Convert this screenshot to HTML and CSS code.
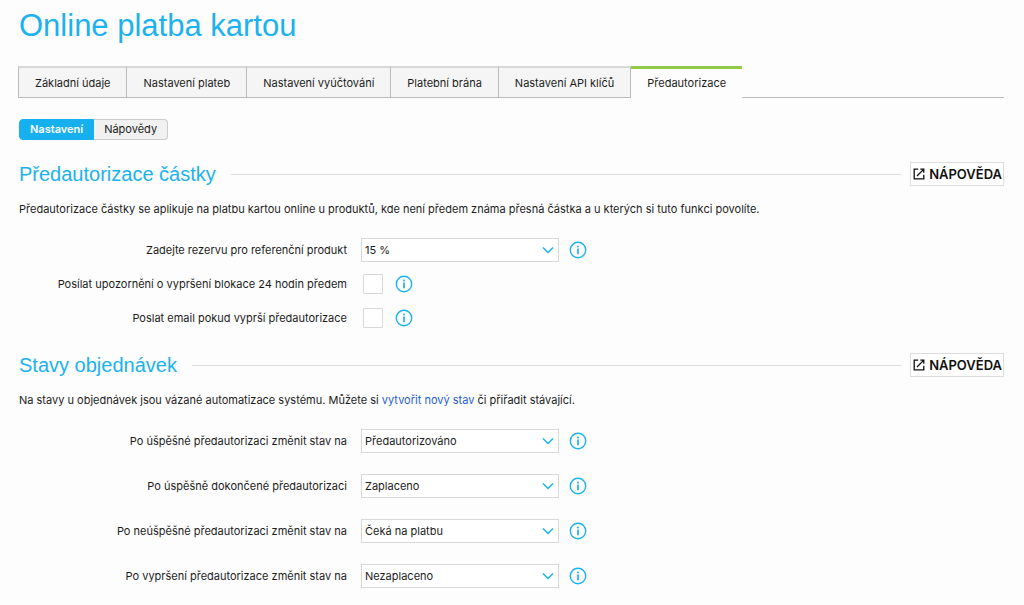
FILE: index.html
```
<!DOCTYPE html>
<html lang="cs">

<head>
  <meta charset="UTF-8" />
  <meta name="viewport" content="width=device-width, initial-scale=1.0" />
  <title>Online platba kartou</title>
  <link rel="stylesheet" href="styles.css">
</head>

<body>
  <!-- shared icons -->
  <svg class="sprite" aria-hidden="true">
    <symbol id="icon-info" viewBox="0 0 18 18">
      <circle cx="9" cy="9" r="7.7" fill="none" stroke="currentColor" stroke-width="1.4" />
      <circle cx="9" cy="5.4" r="1" fill="currentColor" />
      <path d="M9 7.5v5.8" fill="none" stroke="currentColor" stroke-width="1.7" />
    </symbol>
    <symbol id="icon-open" viewBox="0 0 12 12">
      <path d="M5.2 1.2H1.2v9.6h9.6V6.8M7.3 1.2h3.5v3.5M10.6 1.4L4 8" fill="none" stroke="currentColor" stroke-width="1.3" />
    </symbol>
  </svg>

  <main class="page">
    <h1>Online platba kartou</h1>

    <nav class="tabs">
      <a class="tab" href="#">Základní údaje</a>
      <a class="tab" href="#">Nastavení plateb</a>
      <a class="tab" href="#">Nastavení vyúčtování</a>
      <a class="tab" href="#">Platební brána</a>
      <a class="tab" href="#">Nastavení API klíčů</a>
      <a class="tab active" href="#" aria-current="page">Předautorizace</a>
    </nav>

    <div class="switch">
      <button type="button" class="active">Nastavení</button>
      <button type="button">Nápovědy</button>
    </div>

    <section>
      <div class="section-head">
        <h2>Předautorizace částky</h2>
        <button type="button" class="help"><svg><use href="#icon-open" /></svg>NÁPOVĚDA</button>
      </div>
      <p>Předautorizace částky se aplikuje na platbu kartou online u produktů, kde není předem známa přesná částka a u kterých si tuto funkci povolíte.</p>
      <div class="row">
        <label for="reserve">Zadejte rezervu pro referenční produkt</label>
        <div class="field">
          <select id="reserve"><option>15 %</option></select>
          <button type="button" class="info" aria-label="Informace"><svg><use href="#icon-info" /></svg></button>
        </div>
      </div>
      <div class="row row-check">
        <label for="notify">Posílat upozornění o vypršení blokace 24 hodin předem</label>
        <div class="field">
          <input type="checkbox" id="notify">
          <button type="button" class="info" aria-label="Informace"><svg><use href="#icon-info" /></svg></button>
        </div>
      </div>
      <div class="row row-check">
        <label for="email">Poslat email pokud vyprší předautorizace</label>
        <div class="field">
          <input type="checkbox" id="email">
          <button type="button" class="info" aria-label="Informace"><svg><use href="#icon-info" /></svg></button>
        </div>
      </div>
    </section>

    <section>
      <div class="section-head">
        <h2>Stavy objednávek</h2>
        <button type="button" class="help"><svg><use href="#icon-open" /></svg>NÁPOVĚDA</button>
      </div>
      <p>Na stavy u objednávek jsou vázané automatizace systému. Můžete si <a href="#">vytvořit nový stav</a> či přiřadit stávající.</p>
      <div class="row">
        <label for="success">Po úšpěšné předautorizaci změnit stav na</label>
        <div class="field">
          <select id="success"><option>Předautorizováno</option></select>
          <button type="button" class="info" aria-label="Informace"><svg><use href="#icon-info" /></svg></button>
        </div>
      </div>
      <div class="row">
        <label for="done">Po úspěšně dokončené předautorizaci</label>
        <div class="field">
          <select id="done"><option>Zaplaceno</option></select>
          <button type="button" class="info" aria-label="Informace"><svg><use href="#icon-info" /></svg></button>
        </div>
      </div>
      <div class="row">
        <label for="failed">Po neúšpěšné předautorizaci změnit stav na</label>
        <div class="field">
          <select id="failed"><option>Čeká na platbu</option></select>
          <button type="button" class="info" aria-label="Informace"><svg><use href="#icon-info" /></svg></button>
        </div>
      </div>
      <div class="row">
        <label for="expired">Po vypršení předautorizace změnit stav na</label>
        <div class="field">
          <select id="expired"><option>Nezaplaceno</option></select>
          <button type="button" class="info" aria-label="Informace"><svg><use href="#icon-info" /></svg></button>
        </div>
      </div>
    </section>
  </main>
</body>

</html>
```
FILE: styles.css
```
* {
  box-sizing: border-box;
}

body {
  margin: 0;
  background: #fdfdfd;
  color: #1c1c1c;
  font-family: Inter, "Liberation Sans", sans-serif;
  font-size: 11px;
  line-height: 16px;
}

button,
select {
  font: inherit;
  color: inherit;
}

.sprite {
  display: none;
}

.page {
  padding: 8px 20px 0 18px;
}

h1,
h2 {
  margin: 0;
  color: #1bb2ef;
  font-family: "Liberation Sans", Arial, sans-serif;
  font-weight: 400;
}

h1 {
  font-size: 31px;
  line-height: 36px;
}

h2 {
  font-size: 20px;
  line-height: 24px;
}

/* tabs */
.tabs {
  display: flex;
  margin-top: 22px;
}

.tabs::after {
  content: "";
  flex: 1;
  border-bottom: 1px solid #bbb;
}

.tab {
  padding: 7px 16px 6px;
  border-top: 2px solid #d8d8d8;
  border-right: 1px solid #bbb;
  border-bottom: 1px solid #bbb;
  background: #f5f5f5;
  color: inherit;
  text-decoration: none;
}

.tab:first-child {
  border-left: 1px solid #bbb;
}

.tab.active {
  padding-top: 6px;
  border-top: 3px solid #92cb48;
  border-right: 0;
  border-bottom: 0;
  background: none;
}

/* settings / help switch */
.switch {
  display: flex;
  margin-top: 21px;
}

.switch button {
  padding: 1px 10px;
  border: 1px solid #ccc;
  border-left: 0;
  border-radius: 0 4px 4px 0;
  background: #f1f1f1;
  line-height: 17px;
}

.switch .active {
  border: 1px solid #16b0ee;
  border-radius: 4px 0 0 4px;
  background: #16b0ee;
  color: #fff;
  font-weight: 600;
}

/* sections */
section {
  margin-top: 22px;
}

section + section {
  margin-top: 23px;
}

.section-head {
  display: flex;
  align-items: center;
  gap: 9px;
}

.section-head::before {
  content: "";
  order: 1;
  flex: 1;
  height: 1px;
  margin-left: 6px;
  background: #ddd;
}

.help {
  display: flex;
  align-items: center;
  order: 2;
  gap: 4px;
  height: 24px;
  padding: 0 1px 0 2px;
  border: 1px solid #ddd;
  background: #fff;
  color: #111;
  font-size: 13px;
  font-weight: 600;
}

.help svg {
  width: 12px;
  height: 12px;
}

p {
  margin: 15px 0 21px;
}

h1,
h2,
.switch,
p {
  padding-left: 1px;
}

p a {
  color: #1f62cf;
  text-decoration: none;
}

.row {
  display: grid;
  grid-template-columns: 329px 1fr;
  column-gap: 14px;
  align-items: center;
  min-height: 24px;
  margin-bottom: 21px;
}

.row label {
  text-align: right;
}

.row:has(+ .row-check),
.row-check {
  margin-bottom: 10px;
}

.field {
  display: flex;
  align-items: center;
  gap: 10px;
}

select {
  width: 198px;
  height: 24px;
  padding: 0 24px 0 3px;
  border: 1px solid #d8d8d8;
  border-radius: 0;
  appearance: none;
  background: #fff url("data:image/svg+xml,%3Csvg xmlns='http://www.w3.org/2000/svg' width='12' height='8' fill='none' stroke='%231bb2ef' stroke-width='1.5'%3E%3Cpath d='M1 1.5l5 5 5-5'/%3E%3C/svg%3E") no-repeat right 4px center;
}

input[type="checkbox"] {
  width: 20px;
  height: 20px;
  margin: 0 2px;
  border: 1px solid #d8d8d8;
  border-radius: 1px;
  appearance: none;
  background: #fff;
}

input[type="checkbox"]:checked {
  background: #16b0ee;
}

.info {
  display: flex;
  padding: 0;
  border: 0;
  background: none;
  color: #1bb2ef;
}

.info svg {
  width: 18px;
  height: 18px;
}
```
